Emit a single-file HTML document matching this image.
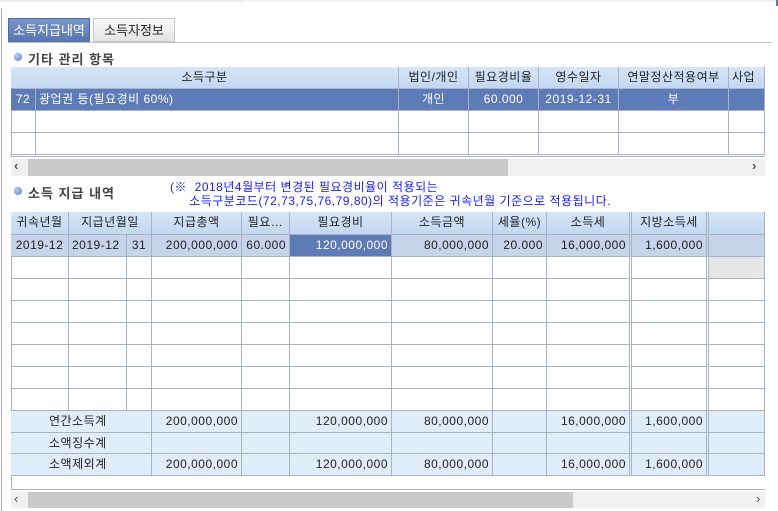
<!DOCTYPE html>
<html><head><meta charset="utf-8"><style>
*{margin:0;padding:0;box-sizing:border-box}
body{width:778px;height:511px;background:#fff;position:relative;overflow:hidden;font-family:"Liberation Sans","Noto Sans CJK KR","NanumGothic",sans-serif;font-size:12px;color:#222}
.a{position:absolute}
.c{position:absolute;border-right:1px solid #a9b3c6;border-bottom:1px solid #a9b3c6;height:100%;line-height:21px;white-space:nowrap;overflow:hidden;padding:0 3px;letter-spacing:0.5px}
.row{position:absolute;left:11px;width:754px}
.h{background:linear-gradient(#d6e5f8,#c2d7f2);text-align:center}
.r{text-align:right}
.ce{text-align:center}
</style></head><body>
<div class="a" style="left:0;top:0;width:778px;height:2px;background:#ececec"></div>
<div class="a" style="left:243px;top:0;width:535px;height:2px;background:#f4f4f4"></div>
<div class="a" style="left:1px;top:8px;width:1px;height:503px;background:#aab0c0"></div>
<div class="a" style="left:776px;top:0;width:2px;height:6px;background:#5b7ab5"></div>
<div class="a" style="left:8px;top:18px;width:82px;height:25px;background:linear-gradient(#7b97c8,#5674b0);color:#fff;text-align:center;line-height:24px;font-size:13px;border:1px solid #4d6aa5">소득지급내역</div>
<div class="a" style="left:93px;top:18px;width:82px;height:24px;background:linear-gradient(#fafafa,#e4e4e4);text-align:center;line-height:23px;font-size:13px;border:1px solid #c8c8c8">소득자정보</div>
<div class="a" style="left:8px;top:42px;width:764px;height:1px;background:#c0c0c0"></div>
<div class="a" style="left:14px;top:53px;width:8px;height:8px;border-radius:50%;background:radial-gradient(circle at 35% 35%,#b8ccf0,#5a7fc4)"></div>
<div class="a" style="left:28px;top:49px;font-size:13px;font-weight:bold;color:#444;letter-spacing:1px">기타 관리 항목</div>
<div class="a" style="left:11px;top:67px;width:754px;height:90px;border:1px solid #a9b3c6;border-right:none"></div>
<div class="row" style="top:67px;height:22px">
<div class="c h" style="left:0;width:388px">소득구분</div>
<div class="c h" style="left:388px;width:70px">법인/개인</div>
<div class="c h" style="left:458px;width:70px">필요경비율</div>
<div class="c h" style="left:528px;width:80px">영수일자</div>
<div class="c h" style="left:608px;width:110px">연말정산적용여부</div>
<div class="c h" style="left:718px;width:36px;text-align:left">사업</div>
</div>
<div class="row" style="top:89px;height:22px;background:#5d7bb6;color:#fff">
<div class="c ce" style="left:0;width:25px">72</div>
<div class="c" style="left:25px;width:363px">광업권 등(필요경비 60%)</div>
<div class="c ce" style="left:388px;width:70px">개인</div>
<div class="c ce" style="left:458px;width:70px">60.000</div>
<div class="c ce" style="left:528px;width:80px">2019-12-31</div>
<div class="c ce" style="left:608px;width:110px">부</div>
<div class="c" style="left:718px;width:36px"></div>
</div>
<div class="row" style="top:111px;height:22px">
<div class="c" style="left:0;width:25px"></div><div class="c" style="left:25px;width:363px"></div><div class="c" style="left:388px;width:70px"></div><div class="c" style="left:458px;width:70px"></div><div class="c" style="left:528px;width:80px"></div><div class="c" style="left:608px;width:110px"></div><div class="c" style="left:718px;width:36px"></div>
</div>
<div class="row" style="top:133px;height:22px">
<div class="c" style="left:0;width:25px"></div><div class="c" style="left:25px;width:363px"></div><div class="c" style="left:388px;width:70px"></div><div class="c" style="left:458px;width:70px"></div><div class="c" style="left:528px;width:80px"></div><div class="c" style="left:608px;width:110px"></div><div class="c" style="left:718px;width:36px"></div>
</div>
<div class="a" style="left:11px;top:159px;width:754px;height:17px;background:#f0f0f0"></div>
<div class="a" style="left:28px;top:159px;width:480px;height:17px;background:#c9c9c9"></div>
<div class="a" style="left:14px;top:158px;font-size:13px;font-weight:bold;color:#555">‹</div>
<div class="a" style="left:752px;top:158px;font-size:13px;font-weight:bold;color:#555">›</div>
<div class="a" style="left:14px;top:187px;width:8px;height:8px;border-radius:50%;background:radial-gradient(circle at 35% 35%,#b8ccf0,#5a7fc4)"></div>
<div class="a" style="left:28px;top:183px;font-size:13px;font-weight:bold;color:#444;letter-spacing:1px">소득 지급 내역</div>
<div class="a" style="left:170px;top:180px;color:#1a1aff;line-height:14px;white-space:pre;letter-spacing:0.5px">(※  2018년4월부터 변경된 필요경비율이 적용되는
     소득구분코드(72,73,75,76,79,80)의 적용기준은 귀속년월 기준으로 적용됩니다.</div>
<div class="a" style="left:11px;top:212px;width:754px;height:278px;border:1px solid #a9b3c6;border-right:none"></div>
<div class="row" style="top:212px;height:23px">
<div class="c h" style="left:0;width:58px">귀속년월</div>
<div class="c h" style="left:58px;width:83px">지급년월일</div>
<div class="c h" style="left:141px;width:90px">지급총액</div>
<div class="c h" style="left:231px;width:48px">필요…</div>
<div class="c h" style="left:279px;width:102px">필요경비</div>
<div class="c h" style="left:381px;width:101px">소득금액</div>
<div class="c h" style="left:482px;width:54px">세율(%)</div>
<div class="c h" style="left:536px;width:85px;border-right:3px double #a9b3c6">소득세</div>
<div class="c h" style="left:621px;width:77px;border-right:3px double #a9b3c6">지방소득세</div>
<div class="c h" style="left:698px;width:56px"></div>
</div>
<div class="row" style="top:235px;height:22px;background:#c6d3ea">
<div class="c ce" style="left:0;width:58px">2019-12</div>
<div class="c" style="left:58px;width:58px">2019-12</div>
<div class="c ce" style="left:116px;width:25px">31</div>
<div class="c r" style="left:141px;width:90px">200,000,000</div>
<div class="c r" style="left:231px;width:48px">60.000</div>
<div class="c r" style="left:279px;width:102px;background:#5d7bb6;color:#fff">120,000,000</div>
<div class="c r" style="left:381px;width:101px">80,000,000</div>
<div class="c r" style="left:482px;width:54px">20.000</div>
<div class="c r" style="left:536px;width:85px;border-right:3px double #a9b3c6">16,000,000</div>
<div class="c r" style="left:621px;width:77px;border-right:3px double #a9b3c6">1,600,000</div>
<div class="c" style="left:698px;width:56px"></div>
</div>
<div id="empties"></div>
<script>
var h='';
for(var i=0;i<7;i++){var t=257+i*22;var g=i==0?'background:#e6e6e6;':'';
h+='<div class="row" style="top:'+t+'px;height:22px"><div class="c" style="left:0;width:58px"></div><div class="c" style="left:58px;width:58px"></div><div class="c" style="left:116px;width:25px"></div><div class="c" style="left:141px;width:90px"></div><div class="c" style="left:231px;width:48px"></div><div class="c" style="left:279px;width:102px"></div><div class="c" style="left:381px;width:101px"></div><div class="c" style="left:482px;width:54px"></div><div class="c" style="left:536px;width:85px;border-right:3px double #a9b3c6"></div><div class="c" style="left:621px;width:77px;border-right:3px double #a9b3c6"></div><div class="c" style="left:698px;width:56px;'+g+'"></div></div>';}
var s=[['연간소득계','200,000,000','120,000,000','80,000,000','16,000,000','1,600,000'],['소액징수계','','','','',''],['소액제외계','200,000,000','120,000,000','80,000,000','16,000,000','1,600,000']];
for(var j=0;j<3;j++){var t=411+j*21.5;var r=s[j];
h+='<div class="row" style="top:'+t+'px;height:21.5px;background:#e1ecfa"><div class="c" style="left:0;width:141px;padding-left:38px">'+r[0]+'</div><div class="c r" style="left:141px;width:90px">'+r[1]+'</div><div class="c" style="left:231px;width:48px"></div><div class="c r" style="left:279px;width:102px">'+r[2]+'</div><div class="c r" style="left:381px;width:101px">'+r[3]+'</div><div class="c" style="left:482px;width:54px"></div><div class="c r" style="left:536px;width:85px;border-right:3px double #a9b3c6">'+r[4]+'</div><div class="c r" style="left:621px;width:77px;border-right:3px double #a9b3c6">'+r[5]+'</div><div class="c" style="left:698px;width:56px"></div></div>';}
document.getElementById('empties').innerHTML=h;
</script>
<div class="a" style="left:11px;top:492px;width:754px;height:16px;background:#f0f0f0"></div>
<div class="a" style="left:28px;top:492px;width:545px;height:16px;background:#c9c9c9"></div>
<div class="a" style="left:14px;top:491px;font-size:13px;color:#555">‹</div>
<div class="a" style="left:756px;top:491px;font-size:13px;color:#555">›</div>
</body></html>
